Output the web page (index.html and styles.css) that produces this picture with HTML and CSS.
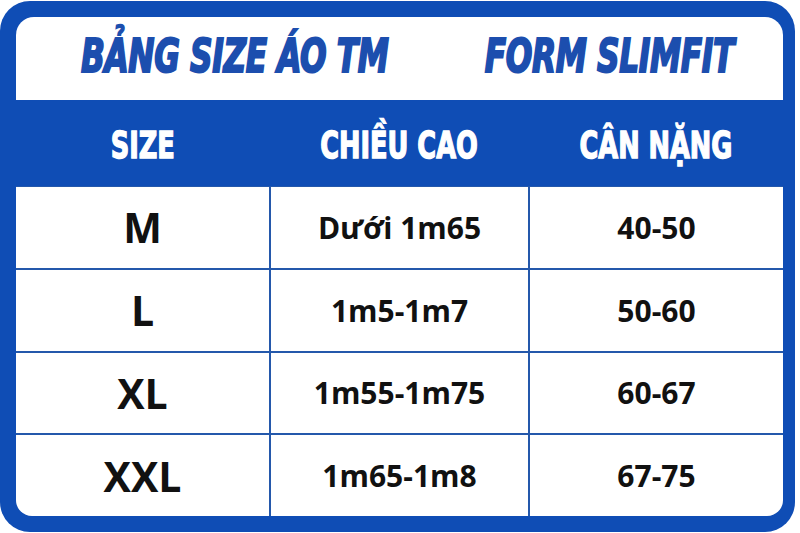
FILE: index.html
```html
<!DOCTYPE html>
<html lang="vi">
<head>
<meta charset="utf-8">
<link rel="stylesheet" href="styles.css">
</head>
<body>
<div class="frame">
  <div class="title">
    <div class="title-cell"><span class="title-text">BẢNG SIZE ÁO TM</span></div>
    <div class="title-cell"><span class="title-text">FORM SLIMFIT</span></div>
  </div>
  <div class="head">
    <div class="head-cell"><span class="head-text">SIZE</span></div>
    <div class="head-cell"><span class="head-text">CHIỀU CAO</span></div>
    <div class="head-cell"><span class="head-text">CÂN NẶNG</span></div>
  </div>
  <div class="table">
    <div class="cell size">M</div>
    <div class="cell">Dưới 1m65</div>
    <div class="cell">40-50</div>
    <div class="cell size">L</div>
    <div class="cell">1m5-1m7</div>
    <div class="cell">50-60</div>
    <div class="cell size">XL</div>
    <div class="cell">1m55-1m75</div>
    <div class="cell">60-67</div>
    <div class="cell size">XXL</div>
    <div class="cell">1m65-1m8</div>
    <div class="cell">67-75</div>
  </div>
</div>
</body>
</html>
```
FILE: styles.css
```css
* { box-sizing: border-box; }
html, body {
  margin: 0;
  padding: 0;
  background: #ffffff;
  width: 800px;
  height: 533px;
  overflow: hidden;
}
.frame {
  margin-top: 1px;
  width: 795px;
  height: 531px;
  background: #0f4db5;
  border-radius: 30px;
  padding: 16px 12px 16px 16px;
  display: flex;
  flex-direction: column;
}
.title {
  height: 83px;
  background: #ffffff;
  border-radius: 18px 18px 0 0;
  display: grid;
  grid-template-columns: 438px 310px;
  align-items: center;
  padding-bottom: 6px;
}
.title-cell {
  display: flex;
  justify-content: center;
  white-space: nowrap;
}
.title-text {
  display: inline-block;
  font-family: "DejaVu Sans", sans-serif;
  font-stretch: condensed;
  font-weight: bold;
  font-style: oblique;
  font-size: 47px;
  color: #1c4eae;
  -webkit-text-stroke: 2px #1c4eae;
  transform: scaleX(0.74);
  letter-spacing: -0.5px;
}
.head {
  height: 86px;
  display: grid;
  grid-template-columns: 254px 259px 254px;
  align-items: center;
  padding-top: 3px;
}
.head-cell {
  display: flex;
  justify-content: center;
  white-space: nowrap;
}
.head-text {
  display: inline-block;
  font-family: "DejaVu Sans", sans-serif;
  font-stretch: condensed;
  font-weight: bold;
  font-size: 38px;
  color: #ffffff;
  -webkit-text-stroke: 1.4px #ffffff;
  transform: scaleX(0.75);
}
.table {
  flex: 1;
  padding-top: 1px;
  display: grid;
  grid-template-columns: 253px 257px 253px;
  grid-template-rows: repeat(4, 1fr);
  gap: 2px;
  background: #2458ab;
  border-radius: 0 0 16px 16px;
  overflow: hidden;
}
.cell {
  background: #ffffff;
  display: flex;
  align-items: center;
  justify-content: center;
  font-family: "Open Sans", "Noto Sans", sans-serif;
  font-weight: 700;
  font-size: 30px;
  color: #111111;
}
.cell.size {
  font-size: 41px;
}
```
